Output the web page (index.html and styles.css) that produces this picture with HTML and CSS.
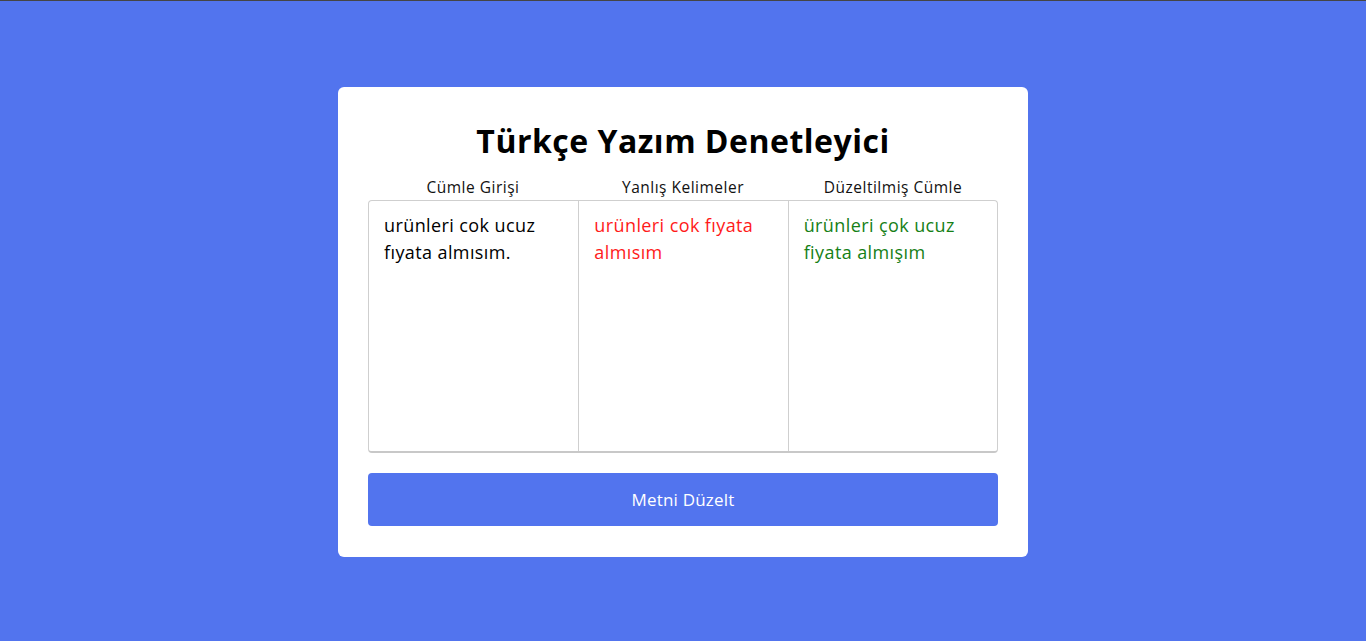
FILE: index.html
```html
<!DOCTYPE html>
<html lang="tr">
<head>
<meta charset="utf-8">
<title>Türkçe Yazım Denetleyici</title>
<link rel="stylesheet" href="styles.css">
</head>
<body>
<main class="card">
  <h1 class="title">Türkçe Yazım Denetleyici</h1>
  <div class="labels">
    <span>Cümle Girişi</span>
    <span>Yanlış Kelimeler</span>
    <span>Düzeltilmiş Cümle</span>
  </div>
  <div class="panes">
    <div class="pane input">urünleri cok ucuz fıyata almısım.</div>
    <div class="pane wrong">urünleri cok fıyata almısım</div>
    <div class="pane fixed">ürünleri çok ucuz fiyata almışım</div>
  </div>
  <button class="btn" type="button">Metni Düzelt</button>
</main>
</body>
</html>
```
FILE: styles.css
```css
* { box-sizing: border-box; }
html, body { margin: 0; padding: 0; }
body {
  min-height: 641px;
  padding-top: 2px;
  background: #5274ee;
  border-top: 1px solid #454545;
  display: flex;
  align-items: center;
  justify-content: center;
  font-family: "Open Sans", "Noto Sans", sans-serif;
}
.card {
  width: 690px;
  height: 470px;
  background: #fff;
  border-radius: 6px;
  padding: 30px;
  display: flex;
  flex-direction: column;
}
.title {
  margin: 0;
  font-size: 32px;
  line-height: 48px;
  font-weight: 700;
  text-align: center;
  color: #000;
  letter-spacing: 0.5px;
}
.labels {
  margin-top: 11px;
  display: grid;
  grid-template-columns: repeat(3, 1fr);
  font-size: 15.5px;
  line-height: 22px;
  letter-spacing: 0.5px;
  text-align: center;
  color: #111;
}
.panes {
  margin-top: 2px;
  height: 253px;
  display: grid;
  grid-template-columns: repeat(3, 1fr);
  border: 1px solid #cfcfcf;
  border-bottom: 2px solid #c8c8c8;
  border-radius: 4px;
}
.pane {
  padding: 11px 15px;
  font-size: 18px;
  line-height: 27px;
  letter-spacing: 0.4px;
}
.pane + .pane { border-left: 1px solid #cfcfcf; }
.input { color: #000; }
.wrong { color: #ff1a1a; }
.fixed { color: #168016; }
.btn {
  margin-top: 20px;
  height: 53px;
  width: 100%;
  border: none;
  border-radius: 4px;
  background: #5274ee;
  color: #fff;
  font-family: inherit;
  font-size: 17px;
  letter-spacing: 0.2px;
}
```
